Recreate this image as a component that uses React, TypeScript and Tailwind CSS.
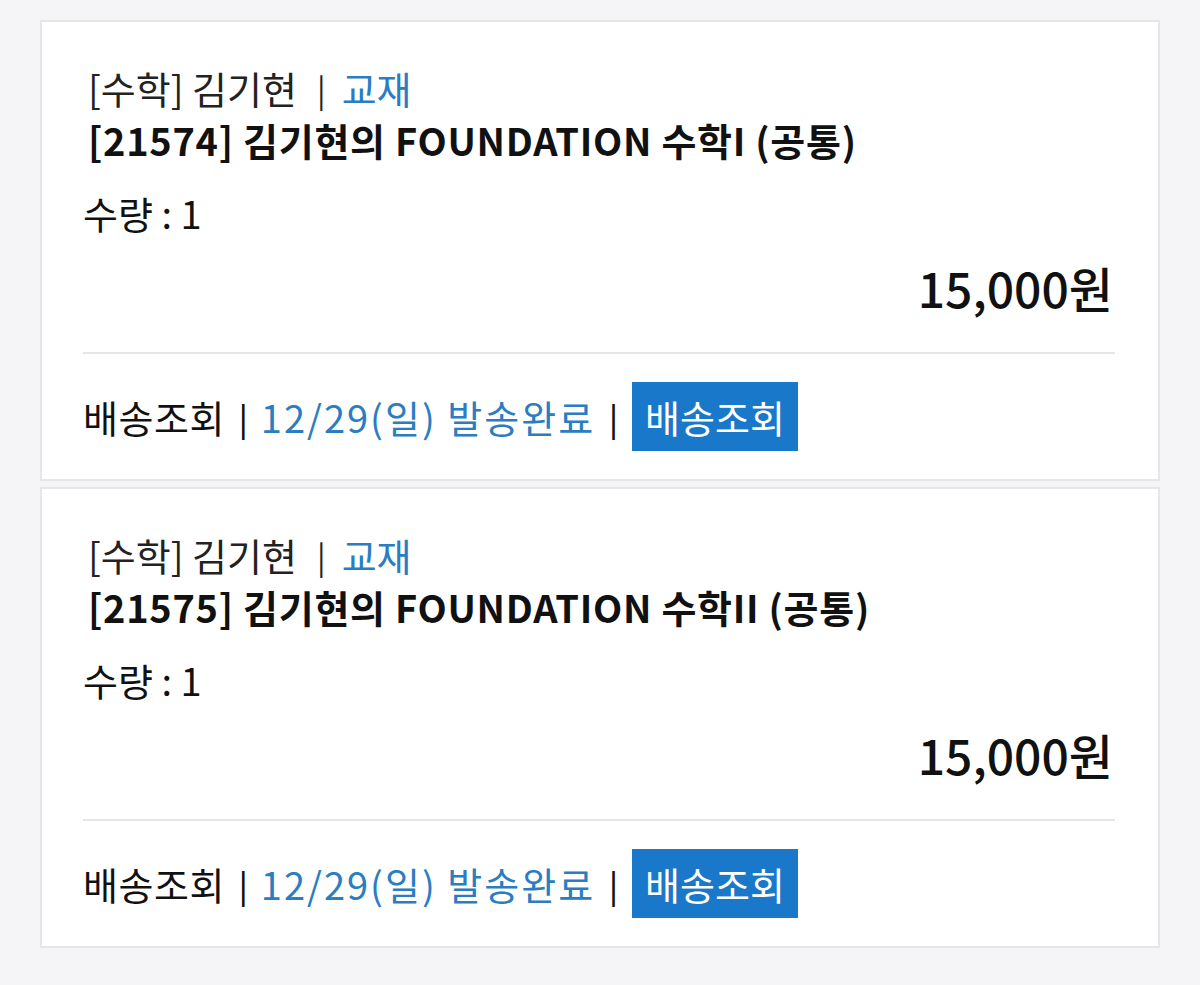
const font = { fontFamily: '"Noto Sans CJK KR", "Noto Sans", sans-serif' };

type Order = { code: string; title: string; qty: number; price: string };

const orders: Order[] = [
  { code: "21574", title: "김기현의 FOUNDATION 수학I (공통)", qty: 1, price: "15,000원" },
  { code: "21575", title: "김기현의 FOUNDATION 수학II (공통)", qty: 1, price: "15,000원" },
];

function OrderCard({ order }: { order: Order }) {
  return (
    <div className="bg-white border-2 border-[#e6e6e8] pt-[40px] pb-[28px] pl-[41px] pr-[43px]">
      <div className="flex items-center text-[38px] leading-[52px] text-[#222] pl-[5px]">
        <span>[수학] 김기현</span>
        <span className="ml-[20px] mr-[16px] text-[32px]">|</span>
        <span className="text-[#2a7dc1]">교재</span>
      </div>
      <div className="text-[38px] leading-[52px] font-bold text-[#111] pl-[5px] tracking-[0.7px]">
        [{order.code}] {order.title}
      </div>
      <div className="mt-[21px] text-[38px] leading-[52px] text-[#111]">수량 : {order.qty}</div>
      <div className="mt-[22px] text-right text-[48px] leading-[52px] font-medium text-[#111] pr-[2px]">
        {order.price}
      </div>
      <div className="mt-[39px] h-[2px] bg-[#e6e6e8]" />
      <div className="mt-[28px] flex items-center text-[38px] text-[#111]">
        <span className="tracking-[0.5px]">배송조회</span>
        <span className="ml-[14px] mr-[13px] text-[32px] font-medium">|</span>
        <span className="text-[#2a7dc1] tracking-[2px]">12/29(일) 발송완료</span>
        <span className="ml-[14px] mr-[14px] text-[32px] font-medium">|</span>
        <button className="h-[69px] px-[13px] bg-[#1a78ca] text-white text-[38px] leading-none">배송조회</button>
      </div>
    </div>
  );
}

export default function App() {
  return (
    <div className="min-h-[985px] bg-[#f5f5f7] pt-[20px] px-[40px] flex flex-col gap-[6px]" style={font}>
      {orders.map((o) => (
        <OrderCard key={o.code} order={o} />
      ))}
    </div>
  );
}
